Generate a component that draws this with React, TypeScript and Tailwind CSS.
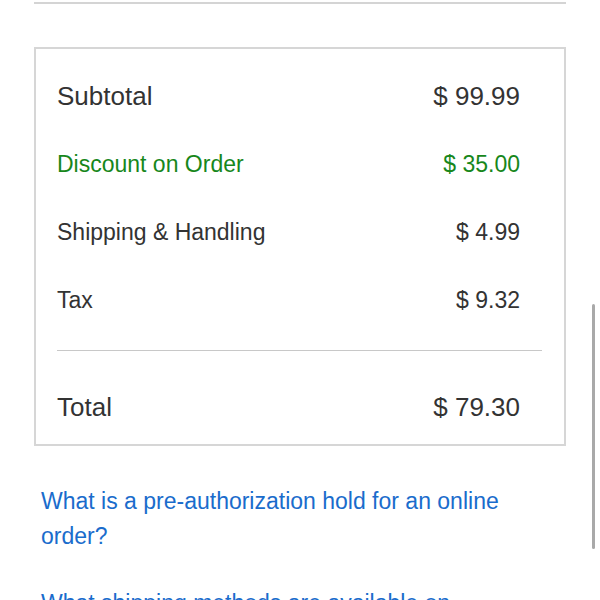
import React from "react";

const rows = [
  { label: "Subtotal", amount: "$ 99.99", big: true, green: false },
  { label: "Discount on Order", amount: "$ 35.00", big: false, green: true },
  { label: "Shipping & Handling", amount: "$ 4.99", big: false, green: false },
  { label: "Tax", amount: "$ 9.32", big: false, green: false },
];

const links = [
  "What is a pre-authorization hold for an online order?",
  "What shipping methods are available on Costco.com?",
];

export default function App() {
  return (
    <div className="relative w-[600px] h-[600px] overflow-hidden bg-white font-['Liberation_Sans','Helvetica',Arial,sans-serif] text-[#333333]">
      <div className="mx-[34px]">
        <div className="mt-[2px] h-[2px] bg-[#d4d4d4]" />

        {/* order summary box */}
        <div className="mt-[43px] border-2 border-[#d6d6d6] pt-[13px] pb-[3px]">
          {rows.map((r) => (
            <div
              key={r.label}
              className={
                "flex h-[68px] items-center justify-between pl-[21px] pr-[44px] " +
                (r.big ? "text-[26px] " : "text-[23px] ") +
                (r.green ? "text-[#17871b]" : "")
              }
            >
              <span>{r.label}</span>
              <span>{r.amount}</span>
            </div>
          ))}

          <div className="mt-[16px] ml-[21px] mr-[22px] h-px bg-[#c8c8c8]" />

          <div className="mt-[22px] flex h-[68px] items-center justify-between pl-[21px] pr-[44px] text-[26px]">
            <span>Total</span>
            <span>$ 79.30</span>
          </div>
        </div>

        {/* help links */}
        <div className="mt-[38px] flex flex-col gap-[32px] pl-[7px]">
          {links.map((l) => (
            <a key={l} href="#" className="text-[23px] leading-[35px] text-[#1a6ccc]">
              {l}
            </a>
          ))}
        </div>
      </div>

      {/* scroll indicator */}
      <div className="absolute left-[592px] top-[304px] h-[245px] w-[3px] rounded-full bg-[#a9a9a9]" />
    </div>
  );
}
